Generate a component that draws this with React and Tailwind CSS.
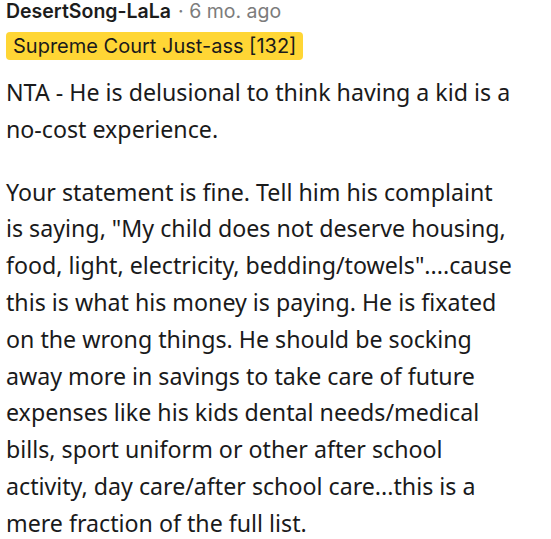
import React from "react";

const paragraphs = [
  ["NTA - He is delusional to think having a kid is a", "no-cost experience."],
  [
    "Your statement is fine. Tell him his complaint",
    'is saying, "My child does not deserve housing,',
    'food, light, electricity, bedding/towels"....cause',
    "this is what his money is paying. He is fixated",
    "on the wrong things. He should be socking",
    "away more in savings to take care of future",
    "expenses like his kids dental needs/medical",
    "bills, sport uniform or other after school",
    "activity, day care/after school care...this is a",
    "mere fraction of the full list.",
  ],
];

const App = () => {
  return (
    <div className="w-[551px] h-[539px] bg-white overflow-hidden px-[6px] font-['Noto_Sans',sans-serif] text-[#1a1a1b]">
      {/* Header */}
      <div className="flex items-center h-[22px] text-[19.5px] leading-[22px] font-['Inter',sans-serif]">
        <span className="font-semibold text-[#1c1c1c]">DesertSong-LaLa</span>
        <span className="text-[#7c7c7c] ml-[7px]">· 6 mo. ago</span>
      </div>
      <div className="mt-[10px] inline-block bg-[#ffd635] rounded-[4px] px-[7px] h-[28px] leading-[28px] text-[20px] text-[#1a1a1b] font-['Inter',sans-serif]">
        Supreme Court Just-ass [132]
      </div>

      {/* Body */}
      <div className="mt-[14px] flex flex-col gap-[26px] text-[23.2px] leading-[36.8px] text-[#1a1a1b]">
        {paragraphs.map((lines, i) => (
          <p key={i} className="whitespace-nowrap">
            {lines.map((line, j) => (
              <span key={j} className="block">{line}</span>
            ))}
          </p>
        ))}
      </div>
    </div>
  );
};

export default App;
